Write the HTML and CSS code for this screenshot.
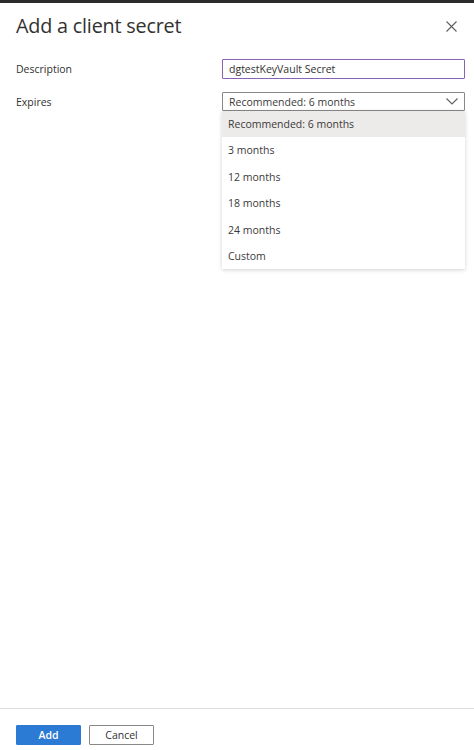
FILE: index.html
```html
<!DOCTYPE html>
<html lang="en">
<head>
    <meta charset="UTF-8">
    <meta name="viewport" content="width=device-width, initial-scale=1.0">
    <title>Add a client secret</title>
    <link rel="stylesheet" href="styles.css">
</head>
<body>
    <div class="panel">
        <div class="panel-header">
            <h1 class="panel-title">Add a client secret</h1>
            <button class="close-btn" aria-label="Close">
                <svg width="11" height="11" viewBox="0 0 11 11">
                    <path d="M0.5 0.5 L10.5 10.5 M10.5 0.5 L0.5 10.5" stroke="#605e5c" stroke-width="1.1" fill="none"/>
                </svg>
            </button>
        </div>

        <div class="panel-body">
            <div class="form-row">
                <label class="form-label" for="description">Description</label>
                <div class="form-field">
                    <input type="text" id="description" class="text-input" value="dgtestKeyVault Secret">
                </div>
            </div>

            <div class="form-row">
                <label class="form-label">Expires</label>
                <div class="form-field">
                    <div class="dropdown">
                        <div class="dropdown-title">
                            <span>Recommended: 6 months</span>
                            <svg width="12" height="7" viewBox="0 0 12 7">
                                <path d="M0.5 0.5 L6 6 L11.5 0.5" stroke="#605e5c" stroke-width="1.1" fill="none"/>
                            </svg>
                        </div>
                        <ul class="dropdown-menu">
                            <li class="dropdown-item selected">Recommended: 6 months</li>
                            <li class="dropdown-item">3 months</li>
                            <li class="dropdown-item">12 months</li>
                            <li class="dropdown-item">18 months</li>
                            <li class="dropdown-item">24 months</li>
                            <li class="dropdown-item">Custom</li>
                        </ul>
                    </div>
                </div>
            </div>
        </div>

        <div class="panel-footer">
            <button class="btn btn-primary">Add</button>
            <button class="btn btn-default">Cancel</button>
        </div>
    </div>
</body>
</html>
```

FILE: styles.css
```css
:root {
    --text-color: #323130;
    --muted-text: #3b3a39;
    --border-color: #8a8886;
    --focus-color: #8a63b5;
    --primary: #2b7bd5;
    --hover-bg: #edebe9;
}

* {
    box-sizing: border-box;
    margin: 0;
    padding: 0;
}

body {
    font-family: 'Open Sans', 'Noto Sans', sans-serif;
    color: var(--text-color);
    background-color: #ffffff;
    font-size: 10.5px;
}

.panel {
    min-height: 100vh;
    display: flex;
    flex-direction: column;
    border-top: 3px solid #2b2b2b;
}

.panel-header {
    display: flex;
    justify-content: space-between;
    align-items: center;
    padding: 7px 16px 0 16px;
    height: 37px;
}

.panel-title {
    font-size: 19.8px;
    font-weight: 400;
    letter-spacing: -0.2px;
}

.close-btn {
    background: none;
    border: none;
    display: flex;
    margin-right: 1px;
    margin-top: 2px;
}

.panel-body {
    flex: 1;
    padding: 19px 9px 0 16px;
}

.form-row {
    display: flex;
    align-items: center;
    margin-bottom: 13px;
}

.form-label {
    width: 206px;
}

.form-field {
    flex: 1;
}

.text-input {
    width: 100%;
    height: 20px;
    border: 1px solid var(--focus-color);
    border-radius: 1px;
    padding: 0 6px;
    font-family: inherit;
    font-size: 10.5px;
    color: var(--text-color);
    outline: none;
}

.dropdown {
    position: relative;
}

.dropdown-title {
    display: flex;
    justify-content: space-between;
    align-items: center;
    height: 19px;
    border: 1px solid var(--border-color);
    border-radius: 1px;
    padding: 0 6px;
    color: var(--muted-text);
}

.dropdown-menu {
    position: absolute;
    top: 19px;
    left: 0;
    right: 0;
    list-style: none;
    background-color: #ffffff;
    box-shadow: 0 1px 4px rgba(0, 0, 0, 0.18);
}

.dropdown-item {
    height: 26.4px;
    line-height: 26.4px;
    padding: 0 6px;
    color: var(--muted-text);
}

.dropdown-item.selected {
    background-color: var(--hover-bg);
}

.panel-footer {
    display: flex;
    gap: 8px;
    border-top: 1px solid #e1dfdd;
    padding: 16px 16px 5px 16px;
}

.btn {
    width: 65px;
    height: 20px;
    font-family: inherit;
    font-size: 10.5px;
    border-radius: 1px;
}

.btn-primary {
    background-color: var(--primary);
    border: 1px solid var(--primary);
    color: #ffffff;
    font-weight: 600;
}

.btn-default {
    background-color: #ffffff;
    border: 1px solid var(--border-color);
    color: var(--text-color);
}
```
